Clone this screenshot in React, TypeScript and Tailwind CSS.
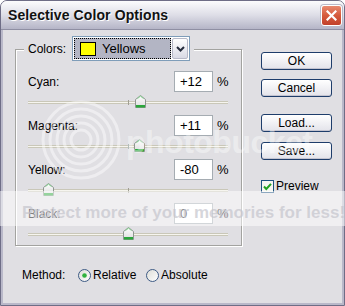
import React from "react";

const channels = [
  { label: "Cyan:", value: "+12", pos: 0.56 },
  { label: "Magenta:", value: "+11", pos: 0.555 },
  { label: "Yellow:", value: "-80", pos: 0.1 },
  { label: "Black:", value: "0", pos: 0.5 },
];

const Thumb = () => (
  <svg width="11" height="13" viewBox="0 0 11 13">
    <defs>
      <linearGradient id="tg" x1="0" y1="0" x2="0" y2="1">
        <stop offset="0" stopColor="#ffffff" />
        <stop offset="1" stopColor="#dcdcdc" />
      </linearGradient>
    </defs>
    <path d="M0.5 4.5 L5.5 0.5 L10.5 4.5 V12.5 H0.5 Z" fill="url(#tg)" stroke="#8e9690" />
    <path d="M2.5 3.5 L5.5 1.2 L8.5 3.5" fill="none" stroke="#7fd08c" />
    <rect x="1" y="10" width="9" height="2.5" fill="#2aa63b" />
  </svg>
);

const Slider = ({ pos }: { pos: number }) => (
  <div className="relative ml-[12px] mt-[4px] h-[12px] w-[200px]">
    <div className="absolute left-0 right-0 top-[5px] h-[3px] border-y border-[#c9c7b8] bg-[#f6f5ef]" />
    <div className="absolute left-[100px] top-[4px] h-[5px] w-px bg-[#a09e92]" />
    <div className="absolute -top-[1px]" style={{ left: pos * 200 - 5 }}>
      <Thumb />
    </div>
  </div>
);

const Button = ({ children, className }: { children: React.ReactNode; className?: string }) => (
  <div
    className={`flex h-[18px] w-[71px] items-center justify-center rounded-[3px] border border-[#1e3d6b] bg-gradient-to-b from-[#ffffff] to-[#e3e3ea] text-[12px] shadow-[inset_0_-1px_0_#c4c4d0] ${className || ""}`}
  >
    {children}
  </div>
);

const Radio = ({ checked }: { checked?: boolean }) => (
  <svg width="13" height="13" viewBox="0 0 13 13">
    <defs>
      <linearGradient id="rg" x1="0" y1="0" x2="1" y2="1">
        <stop offset="0" stopColor="#dcdcd6" />
        <stop offset="1" stopColor="#ffffff" />
      </linearGradient>
    </defs>
    <circle cx="6.5" cy="6.5" r="6" fill="url(#rg)" stroke="#3d5a84" />
    {checked && <circle cx="6.5" cy="6.5" r="2.3" fill="#2fb23e" />}
  </svg>
);

export default function App() {
  return (
    <div className="relative h-[306px] w-[345px] overflow-hidden font-['Liberation_Sans',Arial,sans-serif] text-[12px] text-black">
      <div className="flex h-full flex-col rounded-t-[7px] border border-[#6e6d86] bg-[#e0dfe3]">
        {/* Title bar */}
        <div className="flex h-[29px] items-center justify-between rounded-t-[6px] border-b border-[#8f8fa3] bg-gradient-to-b from-[#fcfcfd] via-[#dedee7] to-[#b5b5c7] pl-[7px] pr-[2px]">
          <span className="text-[14px] font-bold tracking-[0.1px] text-[#111] [text-shadow:1px_1px_0_#ffffff]">
            Selective Color Options
          </span>
          <div className="flex h-[21px] w-[21px] items-center justify-center rounded-[3px] border border-white bg-gradient-to-b from-[#e88a70] via-[#d55a3c] to-[#c2402a] shadow-[0_0_0_1px_#b9b9c8]">
            <svg width="11" height="11" viewBox="0 0 11 11">
              <path d="M1.5 1.5 L9.5 9.5 M9.5 1.5 L1.5 9.5" stroke="#ffffff" strokeWidth="2.2" strokeLinecap="square" />
            </svg>
          </div>
        </div>

        {/* Body */}
        <div className="flex flex-1 border-x-2 border-b-2 border-[#b9b8c9]">
          <div className="flex flex-col">
            {/* Group box */}
            <div className="ml-[12px] mt-[19px] h-[197px] w-[227px] border border-[#a3a3a0] shadow-[inset_1px_1px_0_#ffffff,1px_1px_0_#ffffff]">
              <div className="-mt-[14px] ml-[8px] flex h-[25px] w-fit items-center bg-[#e0dfe3] px-[4px]">
                <span className="w-[44px]">Colors:</span>
                <div className="flex h-[25px] w-[118px] items-center border border-[#7f9db9] bg-white p-[1px]">
                  <div className="flex h-full flex-1 items-center gap-[6px] border border-dotted border-black bg-[#b3b5c4] pl-[5px]">
                    <div className="h-[14px] w-[16px] border border-black bg-[#ffff00]" />
                    <span className="text-[13px]">Yellows</span>
                  </div>
                  <div className="ml-[1px] flex h-full w-[16px] items-center justify-center rounded-[2px] border border-[#b7b9c8] bg-gradient-to-b from-[#ffffff] to-[#d9dae5]">
                    <svg width="9" height="6" viewBox="0 0 9 6">
                      <path d="M1 1 L4.5 4.5 L8 1" fill="none" stroke="#262c3d" strokeWidth="2" />
                    </svg>
                  </div>
                </div>
              </div>

              <div className="mt-[10px] flex flex-col">
                {channels.map((c, i) => (
                  <div key={c.label} className={i > 0 ? "mt-[7px]" : ""}>
                    <div className="flex h-[21px] items-center pl-[12px]">
                      <span className="w-[146px]">{c.label}</span>
                      <div className="flex h-[21px] w-[39px] items-center border border-[#a5acb2] bg-white pl-[5px] text-[13px]">
                        {c.value}
                      </div>
                      <span className="ml-[4px] text-[13px]">%</span>
                    </div>
                    <Slider pos={c.pos} />
                  </div>
                ))}
              </div>
            </div>

            {/* Method */}
            <div className="ml-[19px] mt-[21px] flex h-[16px] items-center">
              <span className="w-[56px]">Method:</span>
              <Radio checked />
              <span className="ml-[2px] w-[53px]">Relative</span>
              <Radio />
              <span className="ml-[2px]">Absolute</span>
            </div>
          </div>

          {/* Buttons */}
          <div className="ml-[19px] mt-[22px] flex flex-col">
            <Button>OK</Button>
            <Button className="mt-[9px]">Cancel</Button>
            <Button className="mt-[17px]">Load...</Button>
            <Button className="mt-[10px]">Save...</Button>
            <div className="mt-[17px] flex items-center gap-[2px]">
              <svg width="13" height="13" viewBox="0 0 13 13">
                <rect x="0.5" y="0.5" width="12" height="12" fill="#f6f6f2" stroke="#1c5180" />
                <path d="M3 6.5 L5.3 9 L10 3.8" fill="none" stroke="#21a121" strokeWidth="2" />
              </svg>
              <span>Preview</span>
            </div>
          </div>
        </div>
      </div>

      {/* Watermark overlay */}
      <svg className="absolute left-[38px] top-[100px]" width="86" height="80" viewBox="0 0 86 80">
        {[38, 31, 24, 17, 10].map((r) => (
          <circle key={r} cx="43" cy="40" r={r} fill="none" stroke="#ffffff" strokeOpacity="0.45" strokeWidth="3" />
        ))}
      </svg>
      <div className="absolute left-[126px] top-[118px] text-[32px] font-bold tracking-[-0.5px] text-white/40">
        photobucket
      </div>
      <div className="absolute left-0 right-0 top-[191px] h-[35px] bg-white/50" />
      <div className="absolute left-[22px] top-[200px] whitespace-nowrap text-[17px] font-bold text-[#c4c4cc]/70">
        Protect more of your memories for less!
      </div>
    </div>
  );
}
